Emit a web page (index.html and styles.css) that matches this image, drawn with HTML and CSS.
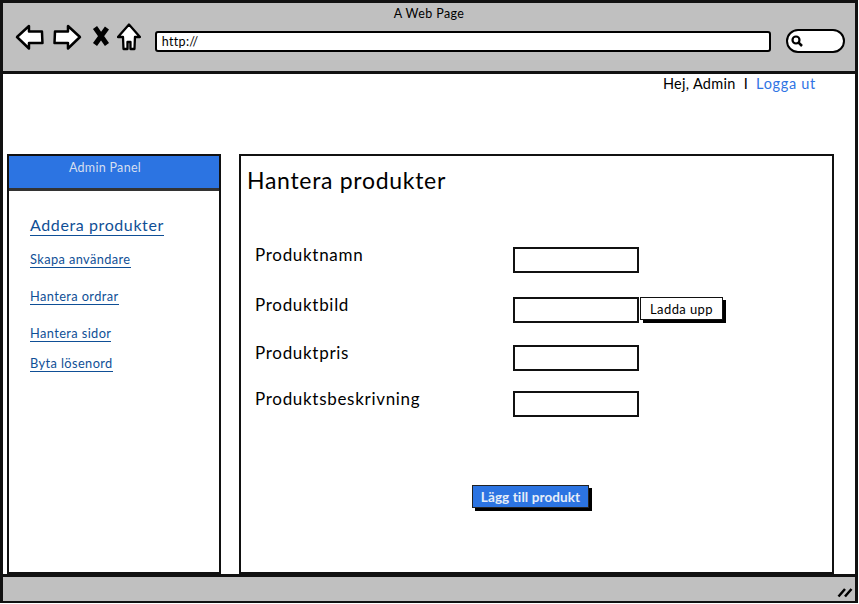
FILE: index.html
```html
<!DOCTYPE html>
<html lang="sv">
<head>
<meta charset="UTF-8" />
<title>Hantera produkter</title>
<link rel="stylesheet" href="styles.css">
</head>
<body>
<div class="window">
  <header class="chrome">
    <div class="chrome-title">A Web Page</div>
    <div class="toolbar">
      <svg class="icon-nav" width="30" height="26" viewBox="0 0 30 26"><path d="M2 13 L14 2 L14 7.500 L27 7.500 L27.500 19 L14 19 L14 24.500 Z" fill="#fff" stroke="#000" stroke-width="2.500" stroke-linejoin="round"/></svg>
      <svg class="icon-nav" width="30" height="26" viewBox="0 0 30 26"><path d="M28 13 L16 2 L16 7.500 L3 7.500 L2.500 19 L16 19 L16 24.500 Z" fill="#fff" stroke="#000" stroke-width="2.500" stroke-linejoin="round"/></svg>
      <svg class="icon-x" width="18" height="22" viewBox="0 0 18 22"><path d="M3 2.500 L15 19.500 M15 3 L3 19.500" fill="none" stroke="#000" stroke-width="5"/></svg>
      <svg class="icon-home" width="24" height="28" viewBox="0 0 24 28"><path d="M12 1.500 L23 14 L18 14 L17.500 26 L13.500 26 L13.500 19 L10.500 19 L10.500 26 L6.500 26 L6 14 L1 14 Z" fill="#fff" stroke="#000" stroke-width="2.300" stroke-linejoin="round"/></svg>
      <div class="url-bar">http://</div>
      <div class="search-box">
        <svg width="14" height="14" viewBox="0 0 14 14"><circle cx="6" cy="6" r="3.500" fill="none" stroke="#000" stroke-width="2.200"/><path d="M8.500 8.500 L12 12" stroke="#000" stroke-width="2.500"/></svg>
      </div>
    </div>
  </header>

  <div class="page">
    <div class="user-line">
      <span>Hej, Admin</span>
      <span class="sep">I</span>
      <a href="#" class="logout">Logga ut</a>
    </div>

    <div class="columns">
      <aside class="sidebar">
        <div class="sidebar-head">Admin Panel</div>
        <nav class="side-nav">
          <a href="#" class="side-main">Addera produkter</a>
          <a href="#" class="side-link first">Skapa användare</a>
          <a href="#" class="side-link">Hantera ordrar</a>
          <a href="#" class="side-link">Hantera sidor</a>
          <a href="#" class="side-link last">Byta lösenord</a>
        </nav>
      </aside>

      <main class="panel">
        <h1>Hantera produkter</h1>
        <div class="form">
          <label>Produktnamn</label>
          <div class="field"><input type="text"></div>
          <label>Produktbild</label>
          <div class="field"><input type="text"><button class="upload">Ladda upp</button></div>
          <label>Produktpris</label>
          <div class="field"><input type="text"></div>
          <label>Produktsbeskrivning</label>
          <div class="field"><input type="text"></div>
        </div>
        <button class="submit">Lägg till produkt</button>
      </main>
    </div>
  </div>

  <footer class="statusbar">
    <svg width="16" height="12" viewBox="0 0 16 12"><path d="M1.500 10.500 L8 3 M8 10.500 L14.500 3" stroke="#000" stroke-width="2.500" fill="none"/></svg>
  </footer>
</div>
</body>
</html>
```

FILE: styles.css
```css
* {
  box-sizing: border-box;
}
html, body {
  margin: 0;
  height: 604px;
  overflow: hidden;
}
body {
  font-family: Lato, sans-serif;
  color: #000;
  background: #fff;
}
.window {
  display: flex;
  flex-direction: column;
  width: 858px;
  height: 603px;
  border: 3px solid #111;
  border-bottom-width: 2px;
}
.chrome {
  height: 71px;
  flex: none;
  background: #c0c0c0;
  border-bottom: 3px solid #111;
}
.chrome-title {
  text-align: center;
  font-size: 12.500px;
  letter-spacing: 0.4px;
  line-height: 16px;
  padding-top: 3px;
}
.toolbar {
  display: flex;
  align-items: flex-start;
  padding: 0 10px 0 12px;
}
.icon-nav {
  margin: 2px 7px 0 0;
}
.icon-x {
  margin: 3px 7px 0 3px;
}
.icon-home {
  margin: 1px 14px 0 0;
}
.url-bar {
  width: 617px;
  height: 21px;
  margin-top: 9px;
  background: #fff;
  border: 2px solid #000;
  border-radius: 3px;
  font-size: 12.500px;
  letter-spacing: 0.3px;
  line-height: 16px;
  padding: 1px 0 0 5px;
}
.search-box {
  width: 59px;
  height: 24px;
  margin: 7px 0 0 15px;
  background: #fff;
  border: 2.500px solid #000;
  border-radius: 12px;
  display: flex;
  align-items: center;
  padding-left: 2px;
}
.page {
  flex: 1;
  display: flex;
  flex-direction: column;
  min-height: 0;
}
.user-line {
  height: 80px;
  display: flex;
  justify-content: flex-end;
  gap: 8px;
  padding: 1px 39px 0 0;
  font-size: 14.500px;
  letter-spacing: 0.3px;
  line-height: 18px;
}
.logout {
  color: #2f74e4;
  text-decoration: none;
  letter-spacing: 0.7px;
}
.columns {
  flex: 1;
  display: flex;
  align-items: stretch;
  gap: 18px;
  padding: 0 21px 0 4px;
}
.sidebar {
  width: 214px;
  flex: none;
  border: 2px solid #111;
  display: flex;
  flex-direction: column;
}
.sidebar-head {
  height: 35px;
  background: #2c74e2;
  border-bottom: 3px solid #333;
  color: #d5dff0;
  text-align: center;
  font-size: 12.500px;
  letter-spacing: 0.3px;
  line-height: 18px;
  padding: 3px 18px 0 0;
}
.side-nav {
  display: flex;
  flex-direction: column;
  align-items: flex-start;
  padding: 24px 0 0 21px;
}
.side-nav a {
  color: #0f4f96;
  text-decoration: none;
  border-bottom: 1.500px solid #0f4f96;
}
.side-main {
  font-size: 16px;
  letter-spacing: 0.6px;
  line-height: 20px;
}
.side-link {
  font-size: 12.800px;
  letter-spacing: 0.4px;
  line-height: 16px;
  margin-top: 20px;
}
.side-link.first {
  margin-top: 15px;
}
.side-link.last {
  margin-top: 13px;
}
.panel {
  flex: 1;
  border: 2px solid #111;
  padding: 0 0 0 6px;
  min-width: 0;
}
.panel h1 {
  margin: 9px 0 0;
  font-size: 23px;
  font-weight: 400;
  letter-spacing: 0.7px;
  line-height: 30px;
}
.form {
  display: grid;
  grid-template-columns: 258px 1fr;
  grid-template-rows: 50px 48px 46px 26px;
  margin: 52px 0 0 8px;
}
.form label {
  font-size: 17px;
  letter-spacing: 0.7px;
  line-height: 16px;
}
.field {
  display: flex;
  align-items: flex-start;
}
.field input {
  width: 126px;
  height: 26px;
  margin: 0;
  padding: 0;
  background: #fff;
  border: 2px solid #111;
  border-radius: 0;
}
.upload {
  width: 83px;
  height: 23px;
  margin-left: 1px;
  padding: 0;
  font-family: inherit;
  font-size: 13px;
  letter-spacing: 0.4px;
  color: #000;
  background: #fff;
  border: 1.500px solid #111;
  box-shadow: 3px 3px 0 #000;
}
.submit {
  display: block;
  width: 117px;
  height: 23px;
  margin: 68px 0 0 225px;
  padding: 0;
  font-family: inherit;
  font-size: 13.500px;
  font-weight: 700;
  letter-spacing: 0.1px;
  color: #e6edf8;
  background: #2c74e2;
  border: 1.500px solid #222;
  box-shadow: 3px 3px 0 #000;
}
.statusbar {
  height: 27px;
  flex: none;
  background: #c0c0c0;
  border-top: 3px solid #111;
  display: flex;
  justify-content: flex-end;
  align-items: center;
  padding: 6px 2px 0 0;
}
```
